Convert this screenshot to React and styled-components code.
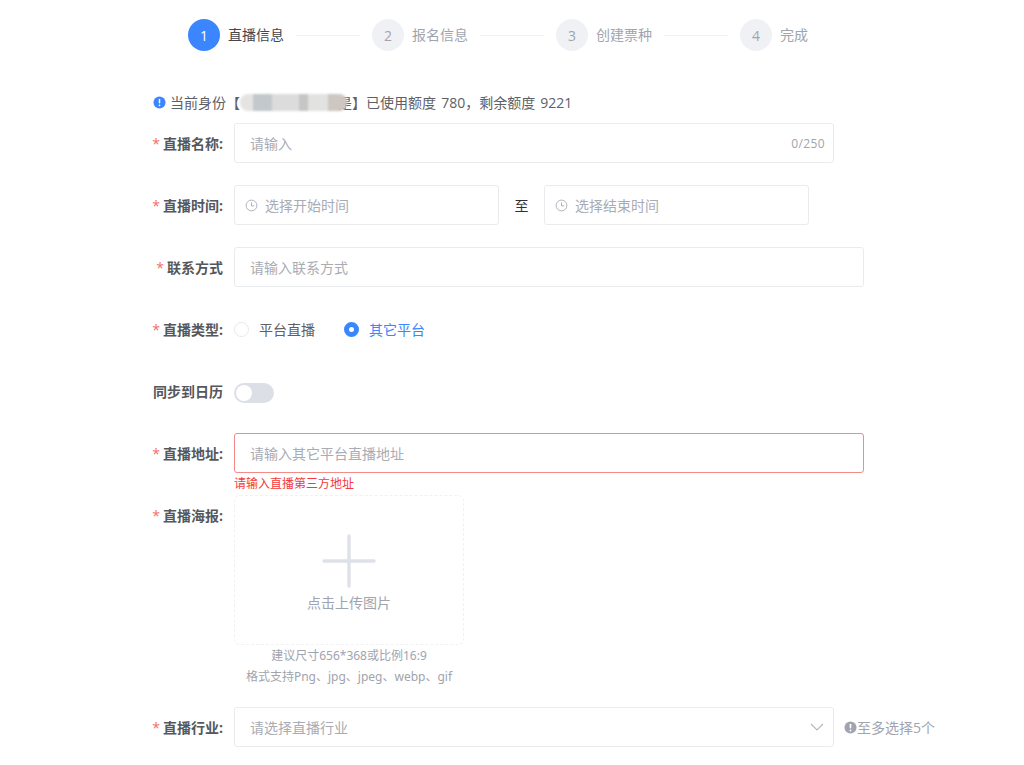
import React from 'react';
import styled, { createGlobalStyle } from 'styled-components';

const GlobalStyle = createGlobalStyle`
  html, body {
    margin: 0;
    padding: 0;
    background: #fff;
  }
  body {
    font-family: 'Open Sans', 'Noto Sans CJK SC', sans-serif;
    font-size: 14px;
    color: #5e6066;
  }
`;

const Page = styled.div`
  width: 1024px;
  height: 765px;
  overflow: hidden;
  padding-left: 150px;
  box-sizing: border-box;
`;

const Steps = styled.div`
  display: flex;
  padding: 19px 0 0 38px;
  height: 32px;
`;

const Step = styled.div`
  width: 184px;
  display: flex;
  align-items: center;
`;

const StepDot = styled.div`
  width: 32px;
  height: 32px;
  border-radius: 50%;
  flex: none;
  display: flex;
  align-items: center;
  justify-content: center;
  font-size: 14px;
  background: ${({ $active }) => ($active ? '#3b86ff' : '#f0f1f4')};
  color: ${({ $active }) => ($active ? '#fff' : '#a0a4ae')};
`;

const StepName = styled.span`
  margin-left: 8px;
  line-height: 20px;
  white-space: nowrap;
  color: ${({ $active }) => ($active ? '#45474d' : '#a0a4ae')};
`;

const StepLine = styled.div`
  width: 64px;
  height: 1px;
  margin-left: 12px;
  background: #eef0f3;
`;

const Notice = styled.div`
  display: flex;
  align-items: center;
  height: 20px;
  margin: 41px 0 11px 3px;
  color: #5e6066;
  white-space: pre;
  word-spacing: 1.5px;
`;

const NoticeIcon = styled.svg`
  width: 13px;
  height: 13px;
  margin: 1px 4px 0 0;
  flex: none;
`;

const BlurredName = styled.span`
  position: relative;
  z-index: 1;
  display: inline-block;
  width: 107px;
  height: 17px;
  margin: 0 -9px 0 0;
  border-radius: 8px;
  filter: blur(1px);
  background: linear-gradient(
    90deg,
    #e6e4e2 0 12%,
    #c3c8cc 12% 30%,
    #dcdcdc 30% 55%,
    #c6c6c6 55% 64%,
    #e2e2e0 64% 82%,
    #cdc6c1 82% 100%
  );
`;

const Row = styled.div`
  display: flex;
  align-items: flex-start;
  margin-bottom: ${({ $tight }) => ($tight ? '0' : '22px')};
`;

const Label = styled.label`
  width: 73px;
  height: 40px;
  margin-right: 11px;
  flex: none;
  line-height: 42px;
  text-align: right;
  white-space: nowrap;
  font-weight: 700;
  font-size: 14px;
  color: #55575c;
`;

const Star = styled.span`
  color: #f56c6c;
  font-weight: 400;
  margin-right: 3px;
`;

const Field = styled.div`
  position: relative;
  display: flex;
  align-items: center;
  box-sizing: border-box;
  height: 40px;
  width: ${({ $width }) => $width}px;
  flex: none;
  padding: 0 ${({ $icon }) => ($icon ? '10px' : '15px')};
  background: #fff;
  border: 1px solid ${({ $error }) => ($error ? '#f58a8a' : '#e9ebef')};
  border-radius: 3px;
  color: #a9acb4;
`;

const FieldText = styled.span`
  white-space: nowrap;
  line-height: 20px;
  padding-top: 2px;
`;

const Counter = styled.span`
  position: absolute;
  right: 8px;
  top: 12px;
  font-size: 12px;
  line-height: 16px;
  letter-spacing: 0.4px;
  color: #a0a4ae;
`;

const ClockIcon = styled.svg`
  width: 13px;
  height: 13px;
  margin-right: 7px;
  flex: none;
`;

const Separator = styled.span`
  width: 45px;
  height: 40px;
  flex: none;
  text-align: center;
  line-height: 42px;
  color: #303133;
`;

const RadioGroup = styled.div`
  display: flex;
  align-items: center;
  height: 40px;
`;

const Radio = styled.div`
  display: flex;
  align-items: center;
  width: 110px;
  color: ${({ $checked }) => ($checked ? '#3b86ff' : '#5e6066')};
`;

const RadioDot = styled.span`
  box-sizing: border-box;
  width: 15px;
  height: 15px;
  border-radius: 50%;
  margin-right: 10px;
  flex: none;
  background: #fff;
  border: ${({ $checked }) => ($checked ? '5px solid #3b86ff' : '1px solid #e6e8ec')};
`;

const SwitchWrap = styled.div`
  display: flex;
  align-items: center;
  height: 40px;
  padding-top: 4px;
  box-sizing: border-box;
`;

const SwitchTrack = styled.div`
  box-sizing: border-box;
  width: 40px;
  height: 20px;
  padding: 2px;
  border-radius: 10px;
  background: #dcdfe6;
`;

const SwitchKnob = styled.div`
  width: 16px;
  height: 16px;
  border-radius: 50%;
  background: #fff;
`;

const ErrorText = styled.div`
  height: 22px;
  margin-left: 84px;
  font-size: 12px;
  line-height: 22px;
  color: #f5383b;
`;

const UploadColumn = styled.div`
  width: 230px;
  flex: none;
`;

const UploadBox = styled.div`
  box-sizing: border-box;
  width: 230px;
  height: 150px;
  padding-top: 38px;
  display: flex;
  flex-direction: column;
  align-items: center;
  border: 1px dashed #f0f1f4;
  border-radius: 6px;
`;

const PlusIcon = styled.svg`
  width: 54px;
  height: 54px;
  flex: none;
`;

const UploadText = styled.span`
  margin-top: 5px;
  line-height: 20px;
  color: #a0a4ae;
`;

const UploadHints = styled.div`
  margin-bottom: 20px;
  text-align: center;
  font-family: 'Noto Sans', 'Noto Sans CJK SC', sans-serif;
  font-size: 12px;
  line-height: 21px;
  color: #a0a4ae;
  white-space: nowrap;
`;

const Chevron = styled.svg`
  position: absolute;
  right: 9px;
  top: 12px;
  width: 14px;
  height: 14px;
`;

const SideHint = styled.div`
  display: flex;
  align-items: center;
  height: 40px;
  margin-left: 10px;
  color: #a0a4ae;
  white-space: nowrap;
`;

const HintIcon = styled.svg`
  width: 13px;
  height: 13px;
  flex: none;
`;

const steps = ['直播信息', '报名信息', '创建票种', '完成'];

const Clock = () => (
  <ClockIcon viewBox="0 0 14 14" fill="none" stroke="#a9acb4" strokeWidth="1">
    <circle cx="7" cy="7" r="5.8" />
    <path d="M7 3.6V7.4H10" />
  </ClockIcon>
);

const FormLabel = ({ children, required = true }) => (
  <Label>
    {required && <Star>*</Star>}
    {children}
  </Label>
);

const App = () => {
  return (
    <Page>
      <GlobalStyle />
      <Steps>
        {steps.map((name, i) => (
          <Step key={name}>
            <StepDot $active={i === 0}>{i + 1}</StepDot>
            <StepName $active={i === 0}>{name}</StepName>
            {i < steps.length - 1 && <StepLine />}
          </Step>
        ))}
      </Steps>

      <Notice>
        <NoticeIcon viewBox="0 0 14 14">
          <circle cx="7" cy="7" r="6.5" fill="#3b86ff" />
          <rect x="6.2" y="3" width="1.6" height="5" rx="0.8" fill="#fff" />
          <circle cx="7" cy="10" r="0.95" fill="#fff" />
        </NoticeIcon>
        当前身份【<BlurredName />是】已使用额度 780，剩余额度 9221
      </Notice>

      <Row>
        <FormLabel>直播名称:</FormLabel>
        <Field $width={600}>
          <FieldText>请输入</FieldText>
          <Counter>0/250</Counter>
        </Field>
      </Row>

      <Row>
        <FormLabel>直播时间:</FormLabel>
        <Field $width={265} $icon>
          <Clock />
          <FieldText>选择开始时间</FieldText>
        </Field>
        <Separator>至</Separator>
        <Field $width={265} $icon>
          <Clock />
          <FieldText>选择结束时间</FieldText>
        </Field>
      </Row>

      <Row>
        <FormLabel>联系方式</FormLabel>
        <Field $width={630}>
          <FieldText>请输入联系方式</FieldText>
        </Field>
      </Row>

      <Row>
        <FormLabel>直播类型:</FormLabel>
        <RadioGroup>
          <Radio>
            <RadioDot />
            平台直播
          </Radio>
          <Radio $checked>
            <RadioDot $checked />
            其它平台
          </Radio>
        </RadioGroup>
      </Row>

      <Row>
        <FormLabel required={false}>同步到日历</FormLabel>
        <SwitchWrap>
          <SwitchTrack>
            <SwitchKnob />
          </SwitchTrack>
        </SwitchWrap>
      </Row>

      <Row $tight>
        <FormLabel>直播地址:</FormLabel>
        <Field $width={630} $error>
          <FieldText>请输入其它平台直播地址</FieldText>
        </Field>
      </Row>
      <ErrorText>请输入直播第三方地址</ErrorText>

      <Row $tight>
        <FormLabel>直播海报:</FormLabel>
        <UploadColumn>
          <UploadBox>
            <PlusIcon viewBox="0 0 54 54" fill="none" stroke="#dfe1e8" strokeWidth="3.4" strokeLinecap="round">
              <path d="M27 2V52M2 27H52" />
            </PlusIcon>
            <UploadText>点击上传图片</UploadText>
          </UploadBox>
          <UploadHints>
            建议尺寸656*368或比例16:9
            <br />
            格式支持Png、jpg、jpeg、webp、gif
          </UploadHints>
        </UploadColumn>
      </Row>

      <Row>
        <FormLabel>直播行业:</FormLabel>
        <Field $width={600}>
          <FieldText>请选择直播行业</FieldText>
          <Chevron viewBox="0 0 14 14" fill="none" stroke="#b4b7bf" strokeWidth="1.1">
            <path d="M1 4L7 10L13 4" />
          </Chevron>
        </Field>
        <SideHint>
          <HintIcon viewBox="0 0 14 14">
            <circle cx="7" cy="7" r="6.5" fill="#a0a4ae" />
            <rect x="6.1" y="3" width="1.8" height="5" rx="0.9" fill="#fff" />
            <circle cx="7" cy="10.2" r="1" fill="#fff" />
          </HintIcon>
          至多选择5个
        </SideHint>
      </Row>
    </Page>
  );
};

export default App;
